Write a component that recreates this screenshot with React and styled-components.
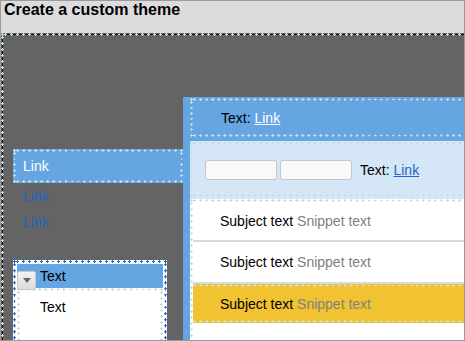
import React from 'react';
import styled, { createGlobalStyle } from 'styled-components';

const BLUE = '#65a5e2';
const PALE = '#d5e7f7';
const PLUS = '#c3dfe0';

// 12x12 tile, slice 3: a plus in each corner cell, one plus + gap per edge segment
const plusBorder = (color, dash) => {
  const plus = (x, y) =>
    `<path d="M${x + 1} ${y}h1v3h-1zM${x} ${y + 1}h3v1h-3z" fill="${color}"/>`;
  const dashes = dash
    ? `<path d="M6 1h3v1H6zM6 10h3v1H6zM1 6h1v3H1zM10 6h1v3h-1z" fill="${dash}"/>`
    : '';
  const svg =
    `<svg xmlns="http://www.w3.org/2000/svg" width="12" height="12">` +
    plus(0, 0) + plus(9, 0) + plus(0, 9) + plus(9, 9) +
    plus(3, 0) + plus(3, 9) + plus(0, 3) + plus(9, 3) +
    dashes +
    `</svg>`;
  return `
    border-style: solid;
    border-color: transparent;
    border-image-source: url("data:image/svg+xml,${encodeURIComponent(svg)}");
    border-image-slice: 3;
    border-image-repeat: round;
  `;
};

const GlobalStyle = createGlobalStyle`
  * { box-sizing: border-box; }
  html, body { margin: 0; padding: 0; background: #ffffff; }
  body { font-family: "Liberation Sans", Arial, sans-serif; font-size: 14px; }
`;

const Window = styled.div`
  width: 465px;
  height: 341px;
  border: 1px solid #9b9b9b;
  display: flex;
  flex-direction: column;
  overflow: hidden;
`;

const TitleBar = styled.div`
  height: 32px;
  flex-shrink: 0;
  background: #dcdcdc;
  padding: 0 3px;
`;

const Title = styled.h1`
  margin: 0;
  font-size: 16px;
  line-height: 18px;
  font-weight: bold;
  color: #000;
`;

const Canvas = styled.div`
  flex: 1;
  min-height: 0;
  display: flex;
  background: #646464;
  ${plusBorder(PLUS, '#111')}
  border-width: 3px 0 0 3px;
  padding: 61px 0 0 9px;
  overflow: hidden;
`;

const Sidebar = styled.div`
  width: 170px;
  flex-shrink: 0;
  align-self: flex-start;
  margin-top: 52px;
  display: flex;
  flex-direction: column;

  & > * {
    flex-shrink: 0;
  }
`;

const SideSelected = styled.div`
  height: 34px;
  display: flex;
  align-items: center;
  padding: 0 0 1px 7px;
  background: ${BLUE};
  color: #ffffff;
  ${plusBorder(PLUS)}
  border-width: 3px;
`;

const SideLink = styled.div`
  height: 26px;
  line-height: 16px;
  padding: 5px 0 0 10px;
  color: #1a66cc;
`;

const Menu = styled.div`
  width: 154px;
  height: 110px;
  margin-top: 25px;
  padding: 1px;
  background: #ffffff;
  ${plusBorder('#1565d0')}
  border-width: 3px;
`;

const MenuHeader = styled.div`
  height: 24px;
  display: flex;
  align-items: flex-start;
  background: ${BLUE};
  position: relative;
  z-index: 1;
`;

const DropButton = styled.div`
  width: 19px;
  height: 19px;
  margin-top: 7px;
  display: flex;
  align-items: center;
  justify-content: center;
  background: linear-gradient(#f2f2f2, #dcdcdc);
  border: 1px solid #c8c8c8;
  border-radius: 2px;
`;

const MenuLabel = styled.span`
  line-height: 16px;
  padding: 4px 0 0 4px;
  color: #000;
`;

const MenuList = styled.div`
  height: 80px;
  padding: 8px 0 0 20px;
  line-height: 16px;
  color: #000;
  ${plusBorder(PLUS)}
  border-width: 3px 3px 0 3px;
`;

const Panel = styled.div`
  flex: 1;
  display: flex;
  flex-direction: column;
  background: #ffffff;
  border-left: 7px solid ${BLUE};
`;

const HeaderBar = styled.div`
  background: ${BLUE};
  padding: 1px 0 4px;
`;

const HeaderInner = styled.div`
  height: 39px;
  display: flex;
  align-items: center;
  padding-left: 28px;
  color: #000;
  ${plusBorder(PLUS)}
  border-width: 3px 0 3px 3px;
`;

const Toolbar = styled.div`
  background: ${PALE};
  padding: 1px 0 2px;
`;

const ToolbarInner = styled.div`
  height: 55px;
  display: flex;
  align-items: center;
  gap: 3px;
  padding-left: 12px;
  color: #000;
  ${plusBorder(PLUS)}
  border-width: 3px 0 3px 3px;
`;

const Field = styled.input`
  width: 72px;
  height: 20px;
  margin: 0;
  border: 1px solid #c6c6c6;
  border-radius: 3px;
  background: #f9f9f9;
`;

const FieldText = styled.span`
  margin-left: 5px;
`;

const Link = styled.a`
  color: ${(p) => (p.$light ? '#ffffff' : '#1a66cc')};
  text-decoration: underline;
`;

const List = styled.div`
  flex: 1;
  ${plusBorder(PLUS)}
  border-width: 3px 0 0 3px;
`;

const Row = styled.div`
  height: ${(p) => (p.$selected ? 39 : 42)}px;
  display: flex;
  align-items: center;
  padding-left: 27px;
  background: ${(p) => (p.$selected ? '#f1c232' : '#ffffff')};
  border-bottom: 2px solid #dadada;
  ${(p) => p.$selected && plusBorder(PLUS)}
  ${(p) => p.$selected && 'border-width: 3px 0 3px 0;'}

  &:first-child {
    height: 40px;
  }
`;

const Subject = styled.span`
  color: #000;
`;

const Snippet = styled.span`
  color: #808080;
`;

const rows = [{ id: 1 }, { id: 2 }, { id: 3, selected: true }];

export default function App() {
  return (
    <>
      <GlobalStyle />
      <Window>
        <TitleBar>
          <Title>Create a custom theme</Title>
        </TitleBar>
        <Canvas>
          <Sidebar>
            <SideSelected>Link</SideSelected>
            <SideLink>Link</SideLink>
            <SideLink>Link</SideLink>
            <Menu>
              <MenuHeader>
                <DropButton>
                  <svg width="8" height="5" viewBox="0 0 8 5">
                    <path d="M0 0h8L4 5z" fill="#666666" />
                  </svg>
                </DropButton>
                <MenuLabel>Text</MenuLabel>
              </MenuHeader>
              <MenuList>Text</MenuList>
            </Menu>
          </Sidebar>
          <Panel>
            <HeaderBar>
              <HeaderInner>
                Text:&nbsp;<Link $light>Link</Link>
              </HeaderInner>
            </HeaderBar>
            <Toolbar>
              <ToolbarInner>
                <Field />
                <Field />
                <FieldText>
                  Text: <Link>Link</Link>
                </FieldText>
              </ToolbarInner>
            </Toolbar>
            <List>
              {rows.map((r) => (
                <Row key={r.id} $selected={r.selected}>
                  <Subject>Subject text</Subject>&nbsp;<Snippet>Snippet text</Snippet>
                </Row>
              ))}
            </List>
          </Panel>
        </Canvas>
      </Window>
    </>
  );
}
